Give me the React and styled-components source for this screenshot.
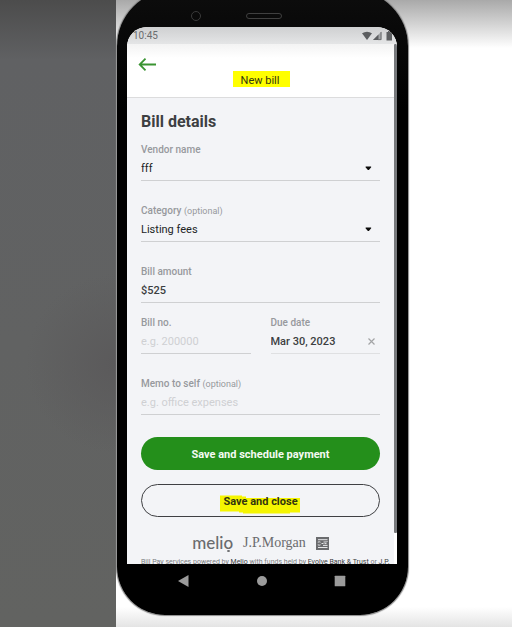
import { useState } from "react";
import styled, { createGlobalStyle } from "styled-components";

export default function App() {
  const [vendor, setVendor] = useState("fff");
  const [category, setCategory] = useState("Listing fees");
  const [amount, setAmount] = useState("$525");
  const [billNumber, setBillNumber] = useState("");
  const [dueDate, setDueDate] = useState("Mar 30, 2023");
  const [memo, setMemo] = useState("");

  function handleSubmit(event) {
    event.preventDefault();
  }

  return (
    <>
      <GlobalStyle />
      <StyledPage>
        <StyledSidebar />
        <StyledStage>
          <StyledPhone>
            <StyledBezel>
              <StyledCamera />
              <StyledSpeaker />
            </StyledBezel>
            <StyledScreen>
              <StyledStatusBar>
                <span>10:45</span>
                <StatusIcons />
              </StyledStatusBar>
              <StyledViewport>
                <StyledContent>
                  <StyledHeader>
                    <StyledIconButton type="button" aria-label="Back">
                      <BackArrow />
                    </StyledIconButton>
                    <StyledTitle>
                      <mark>New bill</mark>
                    </StyledTitle>
                  </StyledHeader>

                  <StyledForm onSubmit={handleSubmit}>
                    <StyledHeading>Bill details</StyledHeading>
                    <StyledFields>
                      <StyledField>
                        <label htmlFor="vendor">Vendor name</label>
                        <StyledSelectBox>
                          <select
                            id="vendor"
                            value={vendor}
                            onChange={(e) => setVendor(e.target.value)}
                          >
                            <option>fff</option>
                          </select>
                          <Caret />
                        </StyledSelectBox>
                      </StyledField>

                      <StyledField>
                        <label htmlFor="category">
                          Category <small>(optional)</small>
                        </label>
                        <StyledSelectBox>
                          <select
                            id="category"
                            value={category}
                            onChange={(e) => setCategory(e.target.value)}
                          >
                            <option>Listing fees</option>
                          </select>
                          <Caret />
                        </StyledSelectBox>
                      </StyledField>

                      <StyledFieldPair>
                        <StyledField $wide>
                          <label htmlFor="amount">Bill amount</label>
                          <StyledInputBox>
                            <input
                              id="amount"
                              value={amount}
                              onChange={(e) => setAmount(e.target.value)}
                            />
                          </StyledInputBox>
                        </StyledField>
                        <StyledField>
                          <label htmlFor="number">Bill no.</label>
                          <StyledInputBox>
                            <input
                              id="number"
                              placeholder="e.g. 200000"
                              value={billNumber}
                              onChange={(e) => setBillNumber(e.target.value)}
                            />
                          </StyledInputBox>
                        </StyledField>
                        <StyledField>
                          <label htmlFor="due">Due date</label>
                          <StyledInputBox $light>
                            <input
                              id="due"
                              value={dueDate}
                              onChange={(e) => setDueDate(e.target.value)}
                            />
                            <StyledIconButton
                              type="button"
                              aria-label="Clear due date"
                              onClick={() => setDueDate("")}
                            >
                              <ClearIcon />
                            </StyledIconButton>
                          </StyledInputBox>
                        </StyledField>
                      </StyledFieldPair>

                      <StyledField>
                        <label htmlFor="memo">
                          Memo to self <small>(optional)</small>
                        </label>
                        <StyledInputBox>
                          <input
                            id="memo"
                            placeholder="e.g. office expenses"
                            value={memo}
                            onChange={(e) => setMemo(e.target.value)}
                          />
                        </StyledInputBox>
                      </StyledField>
                    </StyledFields>

                    <StyledActions>
                      <StyledButton type="submit" $primary>
                        Save and schedule payment
                      </StyledButton>
                      <StyledButton type="button">
                        <StyledMarked>
                          <MarkerStroke />
                          <span>Save and close</span>
                        </StyledMarked>
                      </StyledButton>
                    </StyledActions>
                  </StyledForm>

                  <StyledFooter>
                    <StyledLogos>
                      <StyledMelio>melio</StyledMelio>
                      <StyledMorgan>J.P.Morgan</StyledMorgan>
                      <EvolveLogo />
                    </StyledLogos>
                    <p>
                      Bill Pay services powered by <a href="#melio">Melio</a>{" "}
                      with funds held by <a href="#evolve">Evolve Bank & Trust</a>{" "}
                      or <a href="#jpm">J.P.</a>
                    </p>
                  </StyledFooter>
                </StyledContent>
                <StyledScrollbar>
                  <StyledThumb />
                </StyledScrollbar>
              </StyledViewport>
            </StyledScreen>
            <StyledNavBar>
              <StyledNavButton aria-label="System back">
                <svg width="12" height="12" viewBox="0 0 12 12">
                  <path d="M0 6 10.500 0v12z" fill="#9b9b9b" />
                </svg>
              </StyledNavButton>
              <StyledNavButton aria-label="Home">
                <svg width="12" height="12" viewBox="0 0 12 12">
                  <circle cx="6" cy="6" r="5" fill="#9b9b9b" />
                </svg>
              </StyledNavButton>
              <StyledNavButton aria-label="Recent apps">
                <svg width="12" height="12" viewBox="0 0 12 12">
                  <rect x="0.7" y="0.7" width="10.6" height="10.6" rx="0.6" fill="#9b9b9b" />
                </svg>
              </StyledNavButton>
            </StyledNavBar>
          </StyledPhone>
        </StyledStage>
      </StyledPage>
    </>
  );
}

function StatusIcons() {
  return (
    <svg width="34" height="10" viewBox="0 0 34 10" aria-hidden="true">
      <path d="M0 2.3Q5 -1 10 2.3L5 9z" fill="#5c5e60" />
      <path d="M11 9 19.5 0.5V9z" fill="#a4a6a8" />
      <path d="M11 9 16.5 3.5V9z" fill="#5c5e60" />
      <path d="M19 1V8.6H16" fill="none" stroke="#6c6e70" />
      <path d="M24.5 1H26V0h2.6v1H30v8.5h-5.500z" fill="#5c5e60" />
    </svg>
  );
}

function BackArrow() {
  return (
    <svg width="18" height="13" viewBox="0 0 18 13" aria-hidden="true">
      <path
        d="M18 6.500H2M7.500 0.700 1.700 6.500l5.800 5.800"
        fill="none"
        stroke="#3a9432"
        strokeWidth="1.800"
      />
    </svg>
  );
}

function Caret() {
  return (
    <svg width="7" height="5" viewBox="0 0 7 5" aria-hidden="true">
      <path d="M0.800 0.500h5.200q.5.600 0 1.100L3.900 3.900q-.5.400-1 0L0.700 1.600q-.4-.6.100-1.100z" fill="#0b0b0b" />
    </svg>
  );
}

function ClearIcon() {
  return (
    <svg width="7" height="7" viewBox="0 0 7 7" aria-hidden="true">
      <path d="M0.500 0.500l6 6M6.500 0.500l-6 6" stroke="#a3a4a6" strokeWidth="1.200" />
    </svg>
  );
}

// hand-drawn highlighter behind the label
function MarkerStroke() {
  return (
    <svg width="80" height="19" viewBox="0 0 80 19" aria-hidden="true">
      <path
        d="M0 0.500H22V1.500H26V3H80V17.500H70V18.500H23V17.500H19V16.500H0z"
        fill="#f5f500"
      />
    </svg>
  );
}

function EvolveLogo() {
  return (
    <svg width="13" height="13" viewBox="0 0 13 13" aria-label="Evolve">
      <rect width="13" height="13" fill="#6a6b6e" />
      <path
        d="M2 2.700h9.500M2 10.500h9.500M1.800 5.200q1.500-.8 2.700 0M1.800 7.800q1.500.8 2.700 0M5.500 6.500h2M7.500 5h1.500q1.500 0 2.500-.5M8.500 6.600h2M7 8.400h4.500"
        fill="none"
        stroke="#e6e7e9"
      />
    </svg>
  );
}

const GlobalStyle = createGlobalStyle`
  * {
    box-sizing: border-box;
  }

  body {
    margin: 0;
    font-family: Roboto, "Liberation Sans", sans-serif;
    font-size: 11px;
    color: #3d3f42;
  }

  input,
  select,
  button {
    font: inherit;
    color: inherit;
    margin: 0;
    padding: 0;
    border: none;
    background: none;
    outline: none;
  }
`;

const StyledPage = styled.div`
  display: grid;
  grid-template-columns: 116px 1fr;
  height: 100vh;
  overflow: hidden;
`;

const StyledSidebar = styled.aside`
  background:
    radial-gradient(circle at 100% 58%, #5b5a5b 0, rgba(91, 90, 91, 0) 90px),
    linear-gradient(#4c4c4c, #606163 60px, #626361);
`;

const StyledStage = styled.main`
  padding-left: 1px;
  background: linear-gradient(
    #a9a9a9,
    #d3d3d3 24px,
    #fff 48px,
    #fff calc(100% - 20px),
    #e4e4e4
  );
`;

const StyledPhone = styled.div`
  display: flex;
  flex-direction: column;
  width: 291px;
  max-width: 100%;
  height: calc(100vh - 2px);
  margin-top: -10px;
  padding: 0 11px 0 10px;
  background: linear-gradient(#0d0d0d, #000 120px);
  border-radius: 56px 56px 48px 48px;
  box-shadow: 0 0 1px 1px #8a8a8a;
`;

const StyledBezel = styled.div`
  display: grid;
  grid-template-columns: 1fr auto 1fr;
  align-items: center;
  height: 37px;
  padding: 14px 0 0 3px;
`;

const StyledCamera = styled.span`
  justify-self: end;
  width: 10px;
  height: 10px;
  margin-right: 45px;
  border: 1px solid #3a3a3a;
  border-radius: 50%;
`;

const StyledSpeaker = styled.span`
  width: 36px;
  height: 6px;
  border: 1px solid #3f3f3f;
  border-radius: 3px;
`;

const StyledScreen = styled.div`
  display: flex;
  flex-direction: column;
  flex: 1;
  min-height: 0;
  overflow: hidden;
  background: #fff;
  border-radius: 20px 20px 0 0;
`;

const StyledStatusBar = styled.div`
  display: flex;
  align-items: center;
  justify-content: space-between;
  height: 17px;
  padding: 0 1px 0 6px;
  font-size: 10px;
  color: #6b6d6f;
  background: linear-gradient(#cfd0d1, #e4e5e6);
`;

const StyledViewport = styled.div`
  display: grid;
  grid-template-columns: minmax(0, 1fr) 3px;
  flex: 1;
  min-height: 0;
`;

const StyledContent = styled.div`
  min-height: 0;
  overflow: hidden;
  background: #f3f4f7;
`;

const StyledScrollbar = styled.div`
  background: #fff;
`;

const StyledThumb = styled.div`
  height: 94%;
  background: #77797c;
  border-radius: 1px;
`;

const StyledHeader = styled.header`
  padding: 14px 9px 10px 11px;
  background: linear-gradient(#f3f3f3, #fff 14px);
  border-bottom: 1px solid #dcdcdd;
`;

const StyledIconButton = styled.button`
  display: flex;
  align-items: center;
`;

const StyledTitle = styled.h1`
  margin: 0;
  font-size: 11px;
  font-weight: 400;
  line-height: 12px;
  text-align: center;

  mark {
    display: inline-block;
    padding: 4px 11px 0 8px;
    color: #33350f;
    background: #ff0;
  }
`;

const StyledForm = styled.form`
  padding: 14px 14px 0;
`;

const StyledHeading = styled.h2`
  margin: 0 0 11px;
  font-size: 16px;
  font-weight: 700;
  line-height: 20px;
`;

const StyledFields = styled.div`
  display: grid;
  grid-template-columns: minmax(0, 1fr);
  gap: 23px;
`;

const StyledFieldPair = styled.div`
  display: grid;
  grid-template-columns: repeat(2, minmax(0, 1fr));
  gap: 13px 20px;
`;

const StyledField = styled.div`
  display: flex;
  flex-direction: column;
  grid-column: ${({ $wide }) => ($wide ? "1 / -1" : "auto")};

  label {
    font-size: 10px;
    font-weight: 500;
    line-height: 14px;
    color: #97999d;
  }

  small {
    font-size: 9px;
    font-weight: 400;
  }
`;

const StyledInputBox = styled.div`
  display: flex;
  align-items: center;
  height: 24px;
  padding-right: 5px;
  border-bottom: 1px solid ${({ $light }) => ($light ? "#dfe0e2" : "#cfd0d2")};

  input {
    flex: 1;
    min-width: 0;
    font-weight: 500;
  }

  input::placeholder {
    font-weight: 400;
    color: #cfd0d3;
    opacity: 1;
  }
`;

const StyledSelectBox = styled.div`
  display: grid;
  align-items: center;
  height: 24px;
  border-bottom: 1px solid #cfd0d2;

  select,
  svg {
    grid-area: 1 / 1;
  }

  select {
    appearance: none;
    color: #222426;
  }

  svg {
    justify-self: end;
    margin-right: 8px;
    pointer-events: none;
  }
`;

const StyledActions = styled.div`
  display: grid;
  gap: 14px;
  margin-top: 22px;
`;

const StyledButton = styled.button`
  display: flex;
  align-items: center;
  justify-content: center;
  height: 33px;
  padding-top: 2px;
  font-weight: 700;
  color: ${({ $primary }) => ($primary ? "#f4faf3" : "#33350f")};
  background: ${({ $primary }) => ($primary ? "#248f1b" : "transparent")};
  border: ${({ $primary }) => ($primary ? "none" : "1px solid #3f4043")};
  border-radius: 17px;
`;

const StyledMarked = styled.span`
  position: relative;

  svg {
    position: absolute;
    top: 0;
    left: -3px;
  }

  span {
    position: relative;
  }
`;

const StyledFooter = styled.footer`
  padding: 16px 14px 0;

  p {
    margin: 5px 0 0;
    font-size: 7px;
    line-height: 8px;
    white-space: nowrap;
    color: #7b7d80;
  }

  a {
    color: #3d3f42;
  }
`;

const StyledLogos = styled.div`
  display: flex;
  align-items: center;
  justify-content: center;
  gap: 10px;
  height: 20px;
  color: #6a6b6e;
`;

const StyledMelio = styled.span`
  position: relative;
  font-family: Lato, sans-serif;
  font-size: 17px;
  font-weight: 500;
  line-height: 20px;

  &::after {
    content: "";
    position: absolute;
    right: 3px;
    bottom: 1px;
    width: 3px;
    height: 2px;
    background: currentColor;
    border-radius: 50%;
  }
`;

const StyledMorgan = styled.span`
  font-family: "Liberation Serif", serif;
  font-size: 14px;
  line-height: 20px;
`;

const StyledNavBar = styled.nav`
  display: grid;
  grid-template-columns: repeat(3, 78px);
  justify-content: center;
  height: 51px;
  padding-bottom: 18px;
`;

const StyledNavButton = styled.button`
  display: flex;
  align-items: center;
  justify-content: center;
`;
